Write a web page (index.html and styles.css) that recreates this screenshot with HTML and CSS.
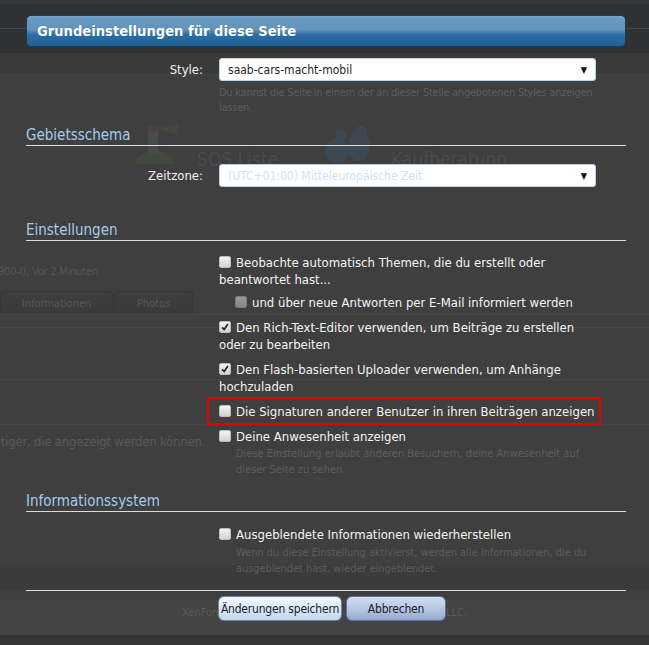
FILE: index.html
```html
<!DOCTYPE html>
<html lang="de">
<head>
<meta charset="utf-8">
<title>Grundeinstellungen</title>
<link rel="stylesheet" href="styles.css">
</head>
<body>
<div class="page">
  <div class="topbar"><div class="topline"></div></div>
  <div class="navband"></div>
  <div class="logos">
    <div class="logo">
      <svg width="48" height="44" viewBox="0 0 48 44"><path d="M2 42 Q10 26 24 29 Q36 27 44 42 Z" fill="#424a3f"/><rect x="16" y="8" width="10" height="24" fill="#4a4a4a"/><rect x="15" y="4" width="12" height="6" fill="#4a4242"/><path d="M27 6 L46 2 L46 14 Z" fill="#47453c"/></svg>
      <span>SOS Liste</span>
    </div>
    <div class="logo birds">
      <svg width="58" height="40" viewBox="0 0 58 40"><ellipse cx="18" cy="25" rx="13" ry="12" fill="#3c4853"/><ellipse cx="40" cy="20" rx="11" ry="15" fill="#3c4955"/><circle cx="22" cy="10" r="6" fill="#3c4853"/><circle cx="42" cy="6" r="6" fill="#3c4955"/></svg>
      <span>Kaufberatung</span>
    </div>
  </div>
  <div class="meta">900-I), Vor 2 Minuten</div>
  <div class="tabs"><span class="tab">Informationen</span><span class="tab">Photos</span></div>
  <div class="rule r1"></div>
  <div class="rule r2"></div>
  <div class="rule r3"></div>
  <div class="bgtext">vtiger, die angezeigt werden können.</div>
  <div class="lowband"></div>
  <div class="footer"><span>XenForo add-ons by Brivium™ © 2009-2013 Brivium LLC.</span></div>
</div>

<form class="dialog">
  <h2 class="title">Grundeinstellungen für diese Seite</h2>

  <div class="row first">
    <label class="lbl">Style:</label>
    <div class="select"><span>saab-cars-macht-mobil</span><span class="arrow">▼</span></div>
    <p class="hint">Du kannst die Seite in einem der an dieser Stelle angebotenen Styles anzeigen lassen.</p>
  </div>

  <h3 class="sect s1">Gebietsschema</h3>
  <div class="row zone">
    <label class="lbl">Zeitzone:</label>
    <div class="select"><span class="ph">(UTC+01:00) Mitteleuropäische Zeit</span><span class="arrow">▼</span></div>
  </div>

  <h3 class="sect s2">Einstellungen</h3>
  <ul class="opts">
    <li class="opt"><span class="cb"></span>Beobachte automatisch Themen, die du erstellt oder beantwortet hast...</li>
    <li class="opt sub"><span class="cb off"></span>und über neue Antworten per E-Mail informiert werden</li>
    <li class="opt"><span class="cb on"><svg viewBox="0 0 12 12"><path d="M2.5 6.5 L5 9 L9.5 2.5" fill="none" stroke="#222" stroke-width="2"/></svg></span>Den Rich-Text-Editor verwenden, um Beiträge zu erstellen oder zu bearbeiten</li>
    <li class="opt"><span class="cb on"><svg viewBox="0 0 12 12"><path d="M2.5 6.5 L5 9 L9.5 2.5" fill="none" stroke="#222" stroke-width="2"/></svg></span>Den Flash-basierten Uploader verwenden, um Anhänge hochzuladen</li>
    <li class="opt marked"><span class="cb"></span>Die Signaturen anderer Benutzer in ihren Beiträgen anzeigen</li>
    <li class="opt"><span class="cb"></span>Deine Anwesenheit anzeigen
      <p class="hint small">Diese Einstellung erlaubt anderen Besuchern, deine Anwesenheit auf dieser Seite zu sehen.</p>
    </li>
  </ul>

  <h3 class="sect s3">Informationssystem</h3>
  <ul class="opts last">
    <li class="opt"><span class="cb"></span>Ausgeblendete Informationen wiederherstellen
      <p class="hint small">Wenn du diese Einstellung aktivierst, werden alle Informationen, die du ausgeblendet hast, wieder eingeblendet.</p>
    </li>
  </ul>

  <div class="buttons">
    <button type="button" class="btn primary">Änderungen speichern</button>
    <button type="button" class="btn">Abbrechen</button>
  </div>
</form>
</body>
</html>
```

FILE: styles.css
```css
* { box-sizing: border-box; }
html, body { margin: 0; padding: 0; }
body {
  width: 649px;
  height: 645px;
  overflow: hidden;
  background: #3f3f3f;
  font-family: "DejaVu Sans Condensed", "DejaVu Sans", Roboto, sans-serif;
  font-size: 13px;
  color: #f0f0f0;
  position: relative;
}

/* ---------- dimmed page behind the dialog ---------- */
.page { width: 649px; height: 645px; }
.topbar {
  height: 53px;
  background: #2f3133;
  border-top: 4px solid #37393b;
  padding-top: 24px;
}
.topline { height: 1px; background: #45474a; }
.navband { height: 22px; background: #3a3a3a; border-bottom: 1px solid #444; }
.logos {
  display: flex;
  margin: 47px 0 0 132px;
  height: 44px;
}
.logo { display: flex; align-items: flex-end; gap: 17px; }
.logo span { font-size: 19px; color: #4b4b4b; line-height: 22px; margin-bottom: -4px; }
.logo.birds { margin-left: 41px; gap: 14px; }
.meta { margin-top: 98px; font-size: 11px; color: #575757; margin-left: -2px; height: 16px; line-height: 16px; letter-spacing: -0.2px; }
.tabs { display: flex; gap: 1px; margin-top: 11px; height: 24px; border-bottom: 1px solid #474747; }
.tab {
  width: 113px;
  text-align: center;
  line-height: 23px;
  font-size: 11px;
  color: #585858;
  background: linear-gradient(#3d3e40, #393a3c);
  border-radius: 4px 4px 0 0;
  border: 1px solid #373737;
  border-bottom: 0;
}
.tab + .tab { width: 79px; }
.rule { height: 1px; background: #464646; }
.r1 { margin-top: 12px; }
.r2 { margin-top: 51px; }
.r3 { margin-top: 44px; }
.bgtext { margin-top: 8px; margin-left: -6px; font-size: 13px; color: #595959; line-height: 18px; letter-spacing: -0.2px; }
.lowband { margin-top: 114px; height: 25px; background: #3b3b3b; }
.footer {
  margin-top: 10px;
  height: 45px;
  background: #444;
  border-bottom: 10px solid #363636;
  text-align: center;
  line-height: 26px;
  font-size: 11px;
  color: #585858;
}

/* ---------- dialog ---------- */
.dialog {
  position: absolute;
  top: 0;
  left: 0;
  width: 649px;
  margin: 0;
  padding: 15px 23px 0 26px;
}
.title {
  margin: 0;
  height: 32px;
  border: 1px solid #1b3d5b;
  border-radius: 5px;
  background: linear-gradient(#7aa6cb 0, #6a9ac0 8%, #6194bc 45%, #2e6ea3 62%, #1d5f95 100%);
  color: #fff;
  font-size: 14.6px;
  font-weight: bold;
  line-height: 30px;
  padding-left: 10px;
  text-shadow: 0 0 1px rgba(0,0,0,.3);
}
.row {
  display: grid;
  grid-template-columns: 177px 377px;
  column-gap: 16px;
  align-items: center;
}
.row.first { margin-top: 11px; }
.row.zone { margin-top: 18px; }
.lbl { text-align: right; color: #f2f2f2; font-size: 13px; }
.select {
  height: 23px;
  background: #fff;
  border: 1px solid #b7d2ec;
  border-radius: 3px;
  padding: 0 8px 0 8px;
  display: flex;
  align-items: center;
  justify-content: space-between;
  color: #1e1e1e;
  font-size: 12px;
}
.select .ph { color: #cfe2f4; }
.arrow { font-size: 9px; color: #111; }
.hint {
  grid-column: 2;
  margin: 4px 0 0;
  font-size: 11px;
  line-height: 15px;
  color: #5d5d5d;
  letter-spacing: -0.25px;
}
.sect {
  margin: 0;
  font-size: 15px;
  font-weight: normal;
  color: #a3cbee;
  line-height: 20px;
  height: 21px;
  border-bottom: 1px solid #dcdcdc;
}
.s1 { margin-top: 10px; }
.s2 { margin-top: 33px; }
.s3 { margin-top: 13px; }
.opts {
  list-style: none;
  margin: 13px 0 0 193px;
  padding: 0;
  width: 377px;
  display: flex;
  flex-direction: column;
  gap: 8px;
}
.opt { line-height: 17px; font-size: 13px; color: #f4f4f4; position: relative; }
.opt.sub { margin-top: -2px; padding-left: 16px; }
.opt.marked::after {
  content: "";
  position: absolute;
  left: -12px;
  right: -5px;
  top: -6px;
  bottom: -5px;
  border: 2px solid #e50000;
}
.cb {
  display: inline-block;
  width: 12px;
  height: 12px;
  margin-right: 5px;
  vertical-align: -1px;
  border-radius: 2px;
  background: linear-gradient(#f4f4f4, #d2d2d2);
  border: 1px solid #bdbdbd;
}
.cb.off { background: linear-gradient(#9a9a9a, #858585); border-color: #7d7d7d; }
.cb svg { display: block; width: 10px; height: 10px; }
.hint.small { margin: 1px 0 0 17px; line-height: 16px; letter-spacing: 0; }
.opts.last { margin-top: 14px; }
.opts.last .hint.small { margin-top: 2px; letter-spacing: -0.05px; }
.buttons {
  margin-top: 13px;
  border-top: 1px solid #dcdcdc;
  padding: 5px 0 0 192px;
  display: flex;
  gap: 4px;
}
.btn {
  height: 25px;
  border-radius: 6px;
  font-family: inherit;
  font-size: 12px;
  color: #1c1c2c;
  padding: 0;
  white-space: nowrap;
  letter-spacing: -0.2px;
  cursor: pointer;
}
.btn.primary {
  width: 124px;
  border: 1px solid #6887a8;
  background: linear-gradient(#f3f8fd, #d8e7f4 55%, #c3d8ec);
}
.btn:not(.primary) {
  width: 100px;
  border: 1px solid #5b739a;
  background: linear-gradient(#d3def0, #b3c5e2 55%, #94abd1);
}
```
